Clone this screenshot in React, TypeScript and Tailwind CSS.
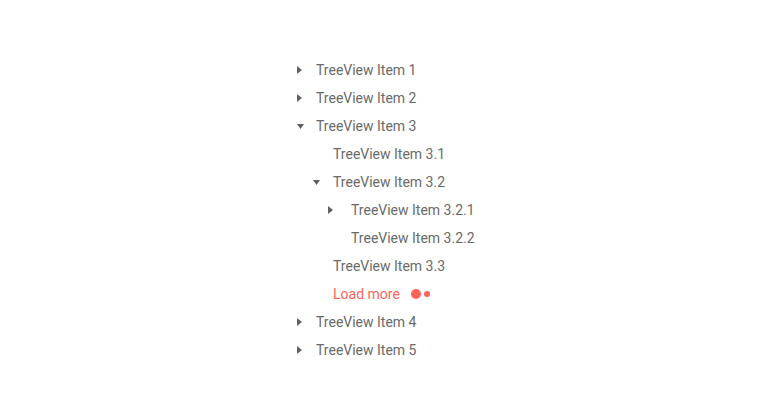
import React from 'react'

type Node = {
  label: string
  level: number
  expandable?: boolean
  expanded?: boolean
  loadMore?: boolean
}

const ROWS: Node[] = [
  { label: 'TreeView Item 1', level: 0, expandable: true },
  { label: 'TreeView Item 2', level: 0, expandable: true },
  { label: 'TreeView Item 3', level: 0, expandable: true, expanded: true },
  { label: 'TreeView Item 3.1', level: 1 },
  { label: 'TreeView Item 3.2', level: 1, expandable: true, expanded: true },
  { label: 'TreeView Item 3.2.1', level: 2, expandable: true },
  { label: 'TreeView Item 3.2.2', level: 2 },
  { label: 'TreeView Item 3.3', level: 1 },
  { label: 'Load more', level: 1, loadMore: true },
  { label: 'TreeView Item 4', level: 0, expandable: true },
  { label: 'TreeView Item 5', level: 0, expandable: true },
]

// caret indent per level, and width of the caret column (text starts after it)
const indent = ['pl-0', 'pl-[16px]', 'pl-[31px]']
const caretCol = ['w-[20px]', 'w-[21px]', 'w-[24px]']

function Caret({ open }: { open?: boolean }) {
  return open ? (
    <svg width="7" height="5" viewBox="0 0 7 5" className="fill-[#616161]">
      <polygon points="0,0 7,0 3.5,5" />
    </svg>
  ) : (
    <svg width="5" height="8" viewBox="0 0 5 8" className="fill-[#616161]">
      <polygon points="0,0 5,4 0,8" />
    </svg>
  )
}

export default function App() {
  return (
    <div className="w-[770px] h-[420px] bg-white flex items-center justify-center" style={{ fontFamily: 'Roboto, "Noto Sans", sans-serif' }}>
      <ul className="w-[190px] ml-[12px] flex flex-col">
        {ROWS.map((r, i) => (
          <li key={i} className={`h-7 flex items-center ${indent[r.level]}`}>
            <span className={`${caretCol[r.level]} flex items-center pl-[1px] shrink-0`}>
              {r.expandable && <Caret open={r.expanded} />}
            </span>
            {r.loadMore ? (
              <span className="flex items-center text-[14px] text-[#ff6358]">
                Load more
                <span className="ml-[11px] w-[10px] h-[10px] rounded-full bg-[#ff6358]" />
                <span className="ml-[3px] w-[6px] h-[6px] rounded-full bg-[#ff6358]" />
              </span>
            ) : (
              <span className="text-[14px] text-[#6a6a6a]">{r.label}</span>
            )}
          </li>
        ))}
      </ul>
    </div>
  )
}
